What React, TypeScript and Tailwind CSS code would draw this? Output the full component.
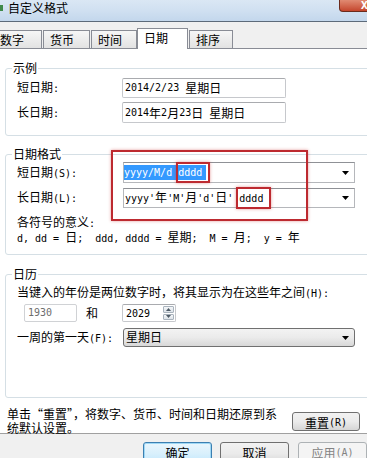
import React from 'react';

const CJK = "font-['Noto_Sans_CJK_SC','Noto_Sans',sans-serif] text-[12px]";
const MONO = "font-['DejaVu_Sans_Mono','Liberation_Mono',monospace] text-[10px]";
const WIDE = /[\u2018-\u201f\u3000-\u9fff\uff00-\uffef]/;
const RUNS = /[\u2018-\u201f\u3000-\u9fff\uff00-\uffef]+|[^\u2018-\u201f\u3000-\u9fff\uff00-\uffef]+/g;

// SimSun-like mix: full-width CJK at 12px, half-width ascii at 6px
function Mix({ text }: { text: string }) {
  const parts = text.match(RUNS) ?? [];
  return (
    <>
      {parts.map((p, i) => (
        <span key={i} className={WIDE.test(p) ? CJK : MONO}>
          {p}
        </span>
      ))}
    </>
  );
}

function Arrow() {
  return (
    <svg width="7" height="4" viewBox="0 0 7 4" aria-hidden>
      <path d="M0 0h7L3.5 4z" fill="#000" />
    </svg>
  );
}

function Tab({ label, className }: { label: string; className: string }) {
  return (
    <div
      className={`border border-b-0 border-[#898c95] pl-[6px] leading-[14px] ${className}`}
    >
      <span className={CJK}>{label}</span>
    </div>
  );
}

function Btn({
  children,
  className = '',
}: {
  children: React.ReactNode;
  className?: string;
}) {
  return (
    <div
      className={`flex justify-center rounded-[3px] border pt-[3px] leading-[14px] whitespace-pre ${className}`}
    >
      {children}
    </div>
  );
}

export default function App() {
  return (
    <div
      lang="zh-CN"
      className="relative h-[458px] w-[367px] overflow-hidden bg-[#f0f0f0] text-[12px] leading-[14px] text-black"
    >
      {/* title bar */}
      <div className="flex h-[22px] items-start border-b border-[#5d6b7a] bg-gradient-to-b from-[#dae7f4] via-[#d0e0f1] to-[#c3d7ec]">
        <div className="mt-[5px] h-[6px] w-[3px] bg-[#3f8a4a]" />
        <span className={`ml-[5px] mt-[1px] ${CJK}`}>自定义格式</span>
        <div className="ml-auto mr-[-14px] flex h-[12px] w-[42px] items-start rounded-bl-[4px] border border-t-0 border-[#6b2a1c] bg-gradient-to-b from-[#e08a72] to-[#c4452c] pl-[21px] text-[10px] font-bold leading-[10px] text-white">
          X
        </div>
      </div>

      {/* tabs */}
      <div className="flex h-[26px] items-end">
        <Tab label="数字" className="ml-[-7px] h-[18px] w-[49px] bg-gradient-to-b from-[#f6f6f6] to-[#e2e2e2] pt-[2px]" />
        <Tab label="货币" className="ml-[1px] h-[18px] w-[47px] bg-gradient-to-b from-[#f6f6f6] to-[#e2e2e2] pt-[2px]" />
        <Tab label="时间" className="ml-[1px] h-[18px] w-[46px] bg-gradient-to-b from-[#f6f6f6] to-[#e2e2e2] pt-[2px]" />
        <Tab label="日期" className="relative z-10 mb-[-1px] h-[21px] w-[51px] bg-white pt-[2px]" />
        <Tab label="排序" className="ml-[1px] h-[18px] w-[44px] bg-gradient-to-b from-[#f6f6f6] to-[#e2e2e2] pt-[2px]" />
      </div>

      {/* panel */}
      <div className="flex h-[386px] flex-col border-y border-[#898c95] border-b-[#a0a0a0] bg-white">
        {/* 示例 */}
        <fieldset className="ml-[5px] mr-[-6px] mt-[12px] rounded-[3px] border border-[#d5dfe5] pb-[12px]">
          <legend className={`ml-[6px] px-[1px] leading-[14px] ${CJK}`}>示例</legend>
          <div className="mt-[3px] flex h-[20px] items-center pl-[11px]">
            <span className="w-[105px]">
              <Mix text="短日期:" />
            </span>
            <div className="flex h-[20px] w-[164px] items-center rounded-[2px] border border-[#c6c8cc] border-t-[#a9abaf] pl-[2px] whitespace-pre">
              <Mix text="2014/2/23 星期日" />
            </div>
          </div>
          <div className="mt-[4px] flex h-[21px] items-center pl-[11px]">
            <span className="w-[105px]">
              <Mix text="长日期:" />
            </span>
            <div className="flex h-[21px] w-[164px] items-center rounded-[2px] border border-[#c6c8cc] border-t-[#a9abaf] pl-[2px] whitespace-pre">
              <Mix text="2014年2月23日 星期日" />
            </div>
          </div>
        </fieldset>

        {/* 日期格式 */}
        <fieldset className="ml-[5px] mr-[-6px] mt-[11px] rounded-[3px] border border-[#d5dfe5] pb-[9px]">
          <legend className={`ml-[6px] px-[1px] leading-[14px] ${CJK}`}>日期格式</legend>
          <div className="mt-[1px] flex h-[21px] items-center pl-[11px]">
            <span className="w-[106px] whitespace-pre">
              <Mix text="短日期(S):" />
            </span>
            <div className="flex h-[21px] w-[232px] items-center border border-[#b5b7bb] border-t-[#8f9196] bg-white pl-[0px]">
              <div className="flex-1">
                <span className="inline-flex h-[15px] items-center bg-[#3399ff] pr-[4px] text-white whitespace-pre">
                  <Mix text="yyyy/M/d dddd" />
                </span>
              </div>
              <div className="flex w-[18px] justify-center">
                <Arrow />
              </div>
            </div>
          </div>
          <div className="mt-[5px] flex h-[20px] items-center pl-[11px]">
            <span className="w-[106px] whitespace-pre">
              <Mix text="长日期(L):" />
            </span>
            <div className="flex h-[20px] w-[232px] items-center border border-[#b5b7bb] border-t-[#8f9196] bg-white pl-[1px]">
              <div className="flex-1 whitespace-pre">
                <Mix text="yyyy'年'M'月'd'日' dddd" />
              </div>
              <div className="flex w-[18px] justify-center">
                <Arrow />
              </div>
            </div>
          </div>
          <div className="mt-[7px] pl-[11px] leading-[13px]">
            <Mix text="各符号的意义:" />
          </div>
          <div className="pl-[11px] leading-[13px] whitespace-pre">
            <Mix text="d, dd = 日;  ddd, dddd = 星期;  M = 月;  y = 年" />
          </div>
        </fieldset>

        {/* 日历 */}
        <fieldset className="ml-[5px] mr-[-6px] mt-[12px] rounded-[3px] border border-[#d5dfe5] pb-[50px]">
          <legend className={`ml-[6px] px-[1px] leading-[14px] ${CJK}`}>日历</legend>
          <div className="mt-[4px] pl-[11px] whitespace-pre">
            <Mix text="当键入的年份是两位数字时，将其显示为在这些年之间(H):" />
          </div>
          <div className="mt-[3px] flex h-[18px] items-center">
            <div className="ml-[18px] flex h-[18px] w-[53px] items-center rounded-[2px] border border-[#d0d2d5] pl-[3px] text-[#6d6d6d]">
              <Mix text="1930" />
            </div>
            <span className={`ml-[9px] ${CJK}`}>和</span>
            <div className="ml-[24px] flex h-[18px] w-[54px] items-center rounded-[2px] border border-[#c6c8cc] border-t-[#a9abaf]">
              <div className="flex-1 pl-[3px]">
                <Mix text="2029" />
              </div>
              <div className="flex h-full w-[13px] flex-col gap-[1px] p-[1px]">
                <div className="flex flex-1 items-center justify-center rounded-[1px] border border-[#a9b3bd] bg-gradient-to-b from-[#f4f6f8] to-[#dde3e9]">
                  <svg width="5" height="3" viewBox="0 0 5 3" aria-hidden>
                    <path d="M2.5 0L5 3H0z" fill="#4d5a66" />
                  </svg>
                </div>
                <div className="flex flex-1 items-center justify-center rounded-[1px] border border-[#a9b3bd] bg-gradient-to-b from-[#f4f6f8] to-[#dde3e9]">
                  <svg width="5" height="3" viewBox="0 0 5 3" aria-hidden>
                    <path d="M0 0h5L2.5 3z" fill="#4d5a66" />
                  </svg>
                </div>
              </div>
            </div>
          </div>
          <div className="mt-[6px] flex h-[19px] items-center pl-[11px]">
            <span className="w-[106px] whitespace-pre">
              <Mix text="一周的第一天(F):" />
            </span>
            <div className="flex h-[19px] w-[232px] items-center rounded-[3px] border border-[#707070] bg-gradient-to-b from-[#f3f3f3] via-[#ebebeb] to-[#d8d8d8] pl-[2px]">
              <div className="flex-1">
                <Mix text="星期日" />
              </div>
              <div className="flex w-[18px] justify-center">
                <Arrow />
              </div>
            </div>
          </div>
        </fieldset>

        {/* reset */}
        <div className="mt-[9px] flex items-start pl-[7px]">
          <div className="w-[283px] leading-[13px]">
            <Mix text="单击“重置”，将数字、货币、时间和日期还原到系" />
            <br />
            <Mix text="统默认设置。" />
          </div>
          <Btn className="ml-[2px] mt-[5px] h-[19px] w-[68px] border-[#707070] bg-gradient-to-b from-[#f2f2f2] via-[#ebebeb] to-[#d6d6d6] pt-[2px]">
            <Mix text="重置(R)" />
          </Btn>
        </div>
      </div>

      {/* buttons */}
      <div className="flex h-[24px] items-start pt-[8px]">
        <Btn className="ml-[143px] h-[23px] w-[73px] border-[#3c7fb1] bg-gradient-to-b from-[#eaf6fd] via-[#d9f0fc] to-[#bee6fd] shadow-[inset_0_0_0_1px_#9fd8f5]">
          <Mix text="确定" />
        </Btn>
        <Btn className="ml-[8px] h-[23px] w-[73px] border-[#707070] bg-gradient-to-b from-[#f2f2f2] via-[#ebebeb] to-[#d6d6d6]">
          <Mix text="取消" />
        </Btn>
        <Btn className="ml-[9px] h-[23px] w-[73px] border-[#adb2b5] bg-[#f4f4f4] text-[#838383]">
          <Mix text="应用(A)" />
        </Btn>
      </div>

      {/* red annotation boxes */}
      <div className="absolute left-[111px] top-[150px] h-[71px] w-[197px] border-2 border-[#bd2a30] shadow-[0_0_3px_rgba(200,40,40,0.45)]" />
      <div className="absolute left-[176px] top-[162px] h-[21px] w-[34px] border-2 border-[#bd2a30] shadow-[0_0_3px_rgba(200,40,40,0.45)]" />
      <div className="absolute left-[236px] top-[187px] h-[22px] w-[35px] border-2 border-[#bd2a30] shadow-[0_0_3px_rgba(200,40,40,0.45)]" />
    </div>
  );
}
